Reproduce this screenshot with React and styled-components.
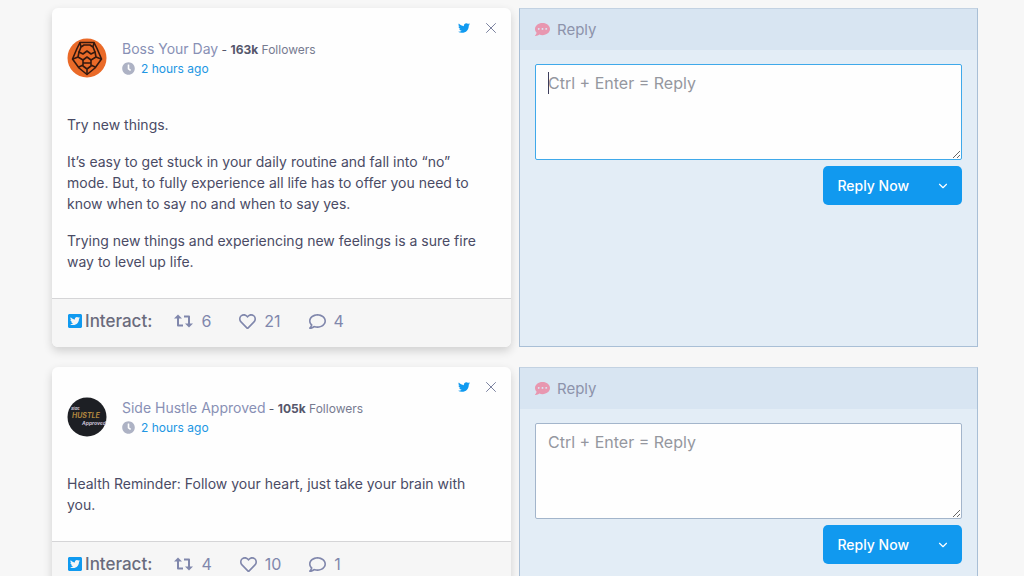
import React, { useState } from "react"
import styled, { createGlobalStyle } from "styled-components"
import { FaTwitter, FaTwitterSquare, FaRegHeart, FaRegComment, FaClock, FaCommentDots } from "react-icons/fa"
import { ChevronDown, X } from "lucide-react"

const posts = [
    {
        id: 1,
        name: "Boss Your Day",
        avatar: "lion",
        followers: "163k",
        time: "2 hours ago",
        text: [
            "Try new things.",
            "It’s easy to get stuck in your daily routine and fall into “no” mode. But, to fully experience all life has to offer you need to know when to say no and when to say yes.",
            "Trying new things and experiencing new feelings is a sure fire way to level up life."
        ],
        retweets: 6,
        likes: 21,
        comments: 4,
        active: true
    },
    {
        id: 2,
        name: "Side Hustle Approved",
        avatar: "hustle",
        followers: "105k",
        time: "2 hours ago",
        text: ["Health Reminder: Follow your heart, just take your brain with you."],
        retweets: 4,
        likes: 10,
        comments: 1,
        active: false
    }
]

const LionAvatar = () => (
    <AvatarSvg viewBox="0 0 40 40" aria-hidden="true">
        <circle cx="20" cy="20" r="19.5" fill="#ea6a28" />
        <g fill="none" stroke="#35190f" strokeWidth="1.6" strokeLinejoin="round" strokeLinecap="round">
            <path d="M13 4.5h14l3 6 4.500 10.500-6.500 9-8 6.500-8-6.500-6.500-9 4.500-10.500z" />
            <path d="M14 9l3-2h6l3 2M13 5l1 4-2 5 4 2 4-3 4 3 4-2-2-5 1-4" />
            <path d="M12 14l-1 5-5 2M28 14l1 5 5 2M11 19l5 3 4-3 4 3 5-3" />
            <path d="M16 22v5l-4 2M24 22v5l4 2M17 25h6M16 28l4 3 4-3M20 31v5" />
        </g>
    </AvatarSvg>
)

const HustleAvatar = () => (
    <AvatarSvg viewBox="0 0 40 40" aria-hidden="true">
        <circle cx="20" cy="20" r="19.5" fill="#1d1f24" />
        <g fontFamily="Inter, sans-serif" fontWeight="700" fontStyle="italic">
            <text x="4" y="13" fontSize="4" fill="#c9c5cf">Side</text>
            <text x="5" y="21" fontSize="7" fill="#b0863f">HUSTLE</text>
            <text x="15" y="28" fontSize="5" fill="#c9c0d6">Approved</text>
        </g>
    </AvatarSvg>
)

const RetweetIcon = () => (
    <svg width="19" height="14" viewBox="0 0 19 14" aria-hidden="true">
        <g fill="none" stroke="currentColor" strokeWidth="2" strokeLinejoin="round">
            <path d="M4 3v8.5h5M10 2.5h5V11" />
        </g>
        <path d="M4 0.5l4 4H0zM15 13.5l4-4h-8z" fill="currentColor" />
    </svg>
)

const Post = ({ post }) => (
    <Card>
        <CardHeader>
            <Identity>
                {post.avatar === "lion" ? <LionAvatar /> : <HustleAvatar />}
                <Details>
                    <NameLine>
                        <Name href="#">{post.name}</Name> - <b>{post.followers}</b> <Followers>Followers</Followers>
                    </NameLine>
                    <TimeLine>
                        <FaClock size={13} color="#adb2c4" />
                        <a href="#">{post.time}</a>
                    </TimeLine>
                </Details>
            </Identity>
            <Tools>
                <FaTwitter size={12} color="#109af0" />
                <CloseButton type="button" aria-label="Close">
                    <X size={18} strokeWidth={1.3} />
                </CloseButton>
            </Tools>
        </CardHeader>
        <CardText>
            {post.text.map((line) => <p key={line}>{line}</p>)}
        </CardText>
        <CardFooter>
            <Interact><FaTwitterSquare size={16} color="#109af0" />Interact:</Interact>
            <Action type="button" aria-label="Retweet"><RetweetIcon />{post.retweets}</Action>
            <Action type="button" aria-label="Like"><FaRegHeart size={17} />{post.likes}</Action>
            <Action type="button" aria-label="Comment"><FaRegComment size={17} />{post.comments}</Action>
        </CardFooter>
    </Card>
)

const Reply = ({ id, active }) => {
    const [text, setText] = useState("")

    return (
        <ReplyPanel>
            <ReplyHeader htmlFor={`reply-${id}`}>
                <FaCommentDots size={15} />
                Reply
            </ReplyHeader>
            <ReplyBody>
                <Field>
                    <TextArea
                        id={`reply-${id}`}
                        value={text}
                        placeholder="Ctrl + Enter = Reply"
                        onChange={(event) => setText(event.target.value)}
                        $active={active}
                    />
                    {active && <Caret />}
                </Field>
                <SplitButton>
                    <ReplyButton type="button">Reply Now</ReplyButton>
                    <MenuButton type="button" aria-label="More reply options">
                        <ChevronDown size={14} />
                    </MenuButton>
                </SplitButton>
            </ReplyBody>
        </ReplyPanel>
    )
}

const App = () => (
    <>
        <GlobalStyle />
        <Feed>
            {posts.map((post) => (
                <Row key={post.id}>
                    <Post post={post} />
                    <Reply id={post.id} active={post.active} />
                </Row>
            ))}
        </Feed>
    </>
)

export default App

const GlobalStyle = createGlobalStyle`
    * {
        box-sizing: border-box;
    }

    body {
        margin: 0;
        background: #f7f7f7;
        color: #4a4b65;
        font-family: Inter, "Open Sans", sans-serif;
        font-size: 14px;
        line-height: 21px;
    }

    button, textarea {
        font-family: inherit;
    }

    a {
        color: #2196e3;
        text-decoration: none;
    }
`

const Feed = styled.main`
    display: flex;
    flex-direction: column;
    gap: 20px;
    padding: 8px 46px 0 52px;
`

const Row = styled.section`
    display: grid;
    grid-template-columns: 1fr 1fr;
    gap: 8px;
`

const Card = styled.article`
    display: flex;
    flex-direction: column;
    background: #fefefe;
    border-radius: 6px;
    box-shadow: 0 4px 10px rgba(0, 0, 0, 0.16);
    overflow: hidden;
`

const CardHeader = styled.header`
    display: flex;
    justify-content: space-between;
    align-items: flex-start;
    height: 106px;
    padding: 0 11px 0 15px;
`

const Identity = styled.div`
    display: flex;
    align-items: center;
    gap: 15px;
    padding-top: 30px;
`

const AvatarSvg = styled.svg`
    width: 40px;
    height: 40px;
    flex: none;
`

const Details = styled.div`
    display: flex;
    flex-direction: column;
`

const NameLine = styled.div`
    font-size: 12px;
    line-height: 20px;
    color: #55566b;
`

const Name = styled.a`
    font-size: 14px;
    color: #8890b5;
`

const Followers = styled.span`
    color: #777b90;
`

const TimeLine = styled.div`
    display: flex;
    align-items: center;
    gap: 6px;
    font-size: 12px;
    line-height: 18px;
`

const Tools = styled.div`
    display: flex;
    align-items: center;
    gap: 12px;
    padding-top: 11px;
`

const CloseButton = styled.button`
    display: flex;
    padding: 0;
    border: 0;
    background: none;
    color: #777e9c;
`

const CardText = styled.div`
    flex: 1;
    padding: 0 30px 10px 15px;

    p {
        margin: 0 0 16px;
    }
`

const CardFooter = styled.footer`
    display: flex;
    align-items: center;
    gap: 28px;
    height: 49px;
    padding: 0 15px 4px;
    border-top: 1px solid #d5d5d7;
    background: #f6f6f6;
`

const Interact = styled.span`
    display: flex;
    align-items: center;
    gap: 2px;
    margin-right: -6px;
    font-size: 17px;
    font-weight: 500;
    color: #6a6b7c;
`

const Action = styled.button`
    display: flex;
    align-items: center;
    gap: 8px;
    padding: 0;
    border: 0;
    background: none;
    color: #8087ac;
    font-size: 16px;
`

const ReplyPanel = styled.section`
    border: 1px solid #a9bfd6;
    border-top-color: #c3d2e2;
    background: #e3edf6;
`

const ReplyHeader = styled.label`
    display: flex;
    align-items: center;
    gap: 7px;
    height: 41px;
    padding: 0 15px;
    background: #d8e5f2;
    color: #8d93ab;
    font-size: 15px;

    svg {
        color: #e897b0;
    }
`

const ReplyBody = styled.div`
    display: flex;
    flex-direction: column;
    align-items: flex-end;
    gap: 6px;
    padding: 14px 15px 15px;
`

const Field = styled.div`
    position: relative;
    width: 100%;
`

const TextArea = styled.textarea`
    display: block;
    width: 100%;
    height: 96px;
    padding: 6px 12px;
    border: 1px solid ${(props) => (props.$active ? "#3fa9ea" : "#a3b5cb")};
    border-radius: 2px;
    outline: none;
    background: #fefefe;
    color: #4a4b65;
    font-size: 16px;
    line-height: 24px;
    resize: vertical;

    &::placeholder {
        color: #95979f;
    }
`

const Caret = styled.span`
    position: absolute;
    top: 8px;
    left: 13px;
    width: 1px;
    height: 22px;
    background: #3d3e5c;
`

const SplitButton = styled.div`
    display: flex;
    height: 39px;
    border-radius: 5px;
    background: #1199ef;
    overflow: hidden;
`

const ReplyButton = styled.button`
    padding: 0 14px;
    border: 0;
    background: none;
    color: #fff;
    font-size: 14px;
    font-weight: 500;
`

const MenuButton = styled.button`
    display: flex;
    align-items: center;
    justify-content: center;
    width: 39px;
    padding: 0;
    border: 0;
    background: none;
    color: #fff;
`
